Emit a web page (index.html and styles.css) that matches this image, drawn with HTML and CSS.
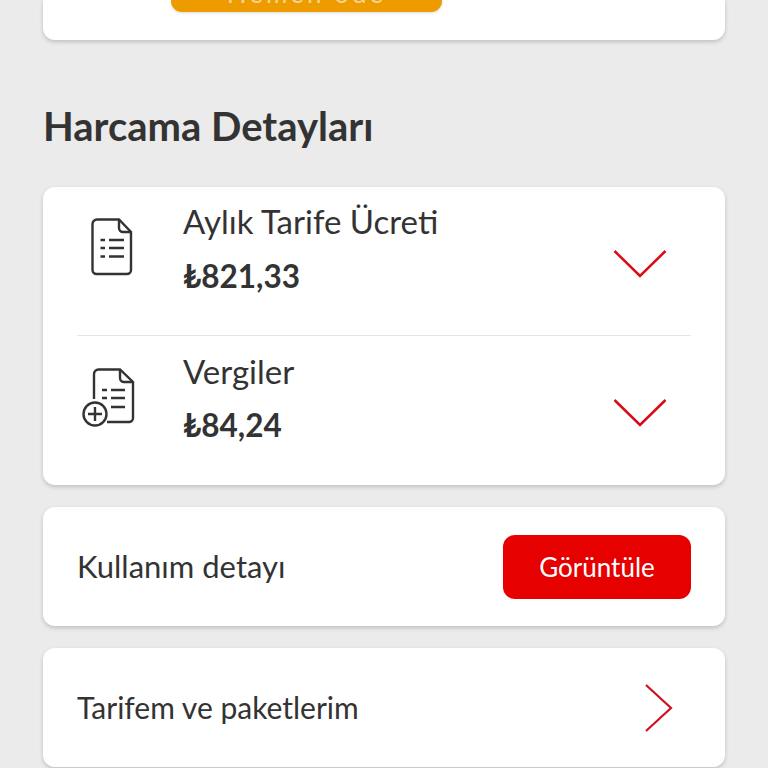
FILE: index.html
```html
<!DOCTYPE html>
<html>
<head>
  <title>Harcama Detayları</title>
  <link rel="stylesheet" href="styles.css">
</head>
<body>
  <div class="page">
    <div class="card top-card">
      <button class="pay-btn"><span>Hemen öde</span></button>
    </div>

    <h2 class="section-title">Harcama Detayları</h2>

    <div class="card detail-card">
      <div class="detail-row">
        <div class="detail-icon">
          <svg width="42" height="58" viewBox="0 0 42 58" fill="none" stroke="#333" stroke-width="2.400">
            <path d="M6 1.500H28L40 14V52a4 4 0 0 1-4 4H5.500a4 4 0 0 1-4-4V6a4.500 4.500 0 0 1 4.500-4.500Z"/>
            <path d="M28 1.500V10a4 4 0 0 0 4 4H40"/>
            <path d="M9.500 22H14M18 22H33M9.500 30H14M18 30H33M9.500 38.500H14M18 38.500H33"/>
          </svg>
        </div>
        <div class="detail-text">
          <div class="detail-name">Aylık Tarife Ücreti</div>
          <div class="detail-price">₺821,33</div>
        </div>
        <svg class="chevron" width="54" height="30" viewBox="0 0 54 30" fill="none" stroke="#dc0a14" stroke-width="2.500">
          <path d="M1.500 2L27 27L52.500 2"/>
        </svg>
      </div>
      <div class="detail-row">
        <div class="detail-icon">
          <svg width="54" height="62" viewBox="0 0 54 62" fill="none" stroke="#333" stroke-width="2.400">
            <path d="M12 32V7a4.500 4.500 0 0 1 4.500-4.500H38L51 15V51a4 4 0 0 1-4 4H25"/>
            <path d="M38 2.500V11a4 4 0 0 0 4 4H51"/>
            <path d="M20 23H25M29 23H43M20 31H25M29 31H43M29 40H43"/>
            <circle cx="13" cy="47" r="11.500"/>
            <path d="M13 40V54M6 47H20"/>
          </svg>
        </div>
        <div class="detail-text">
          <div class="detail-name">Vergiler</div>
          <div class="detail-price">₺84,24</div>
        </div>
        <svg class="chevron" width="54" height="30" viewBox="0 0 54 30" fill="none" stroke="#dc0a14" stroke-width="2.500">
          <path d="M1.500 2L27 27L52.500 2"/>
        </svg>
      </div>
    </div>

    <div class="card link-card">
      <span class="link-label usage-label">Kullanım detayı</span>
      <button class="view-btn">Görüntüle</button>
    </div>

    <div class="card link-card">
      <span class="link-label">Tarifem ve paketlerim</span>
      <svg class="chevron-right" width="30" height="50" viewBox="0 0 30 50" fill="none" stroke="#d01020" stroke-width="2.200">
        <path d="M2 2L27 25L2 48"/>
      </svg>
    </div>
  </div>
</body>
</html>
```

FILE: styles.css
```css
html, body {
  margin: 0;
  height: 768px;
  overflow: hidden;
}

body {
  font-family: Lato, "Noto Sans", sans-serif;
  background-color: #ebebeb;
  color: #333333;
}

.page {
  display: flex;
  flex-direction: column;
  padding: 0 43px;
}

.card {
  background-color: #fff;
  border-radius: 12px;
  box-shadow: 0 2px 4px rgba(0, 0, 0, 0.18);
}

.top-card {
  height: 40px;
  border-radius: 0 0 12px 12px;
  padding-left: 128px;
}

.pay-btn {
  display: block;
  width: 271px;
  height: 12px;
  padding: 0;
  border: none;
  border-radius: 0 0 11px 11px;
  background-color: #ee9b00;
  box-shadow: 0 1px 3px rgba(0, 0, 0, 0.15);
  overflow: hidden;
}

.pay-btn span {
  display: block;
  margin-top: -27px;
  font: 26px/28px Lato, sans-serif;
  letter-spacing: 3px;
  color: #f7d48c;
}

.section-title {
  margin: 0;
  padding-top: 63px;
  height: 84px;
  font-size: 40px;
  line-height: 46px;
  font-weight: 700;
}

.detail-card {
  height: 298px;
  padding: 0 34px;
}

.detail-row {
  display: flex;
  height: 148px;
}

.detail-row + .detail-row {
  height: 149px;
  border-top: 1px solid #e6e6e6;
}

.detail-icon {
  width: 106px;
  padding-top: 31px;
  padding-left: 14px;
  box-sizing: border-box;
}

.detail-row + .detail-row .detail-icon {
  padding-top: 31px;
  padding-left: 5px;
}

.detail-text {
  flex: 1;
  padding-top: 12px;
}

.detail-row + .detail-row .detail-text {
  padding-top: 13px;
}

.detail-name {
  font-size: 33px;
  line-height: 44px;
}

.detail-price {
  margin-top: 12px;
  font-size: 31.500px;
  line-height: 42px;
  font-weight: 700;
}

.detail-row + .detail-row .detail-price {
  margin-top: 11px;
}

.chevron {
  margin-top: 62px;
  margin-right: 24px;
}

.link-card {
  display: flex;
  align-items: center;
  justify-content: space-between;
  height: 119px;
  margin-top: 22px;
  padding: 0 34px;
}

.link-label {
  padding-bottom: 2px;
  font-size: 30px;
}

.usage-label {
  font-size: 31px;
}

.view-btn {
  width: 188px;
  height: 64px;
  border: none;
  border-radius: 12px;
  background-color: #e60000;
  color: #fff;
  font: 26px Lato, sans-serif;
}

.chevron-right {
  margin-right: 17px;
}
```
